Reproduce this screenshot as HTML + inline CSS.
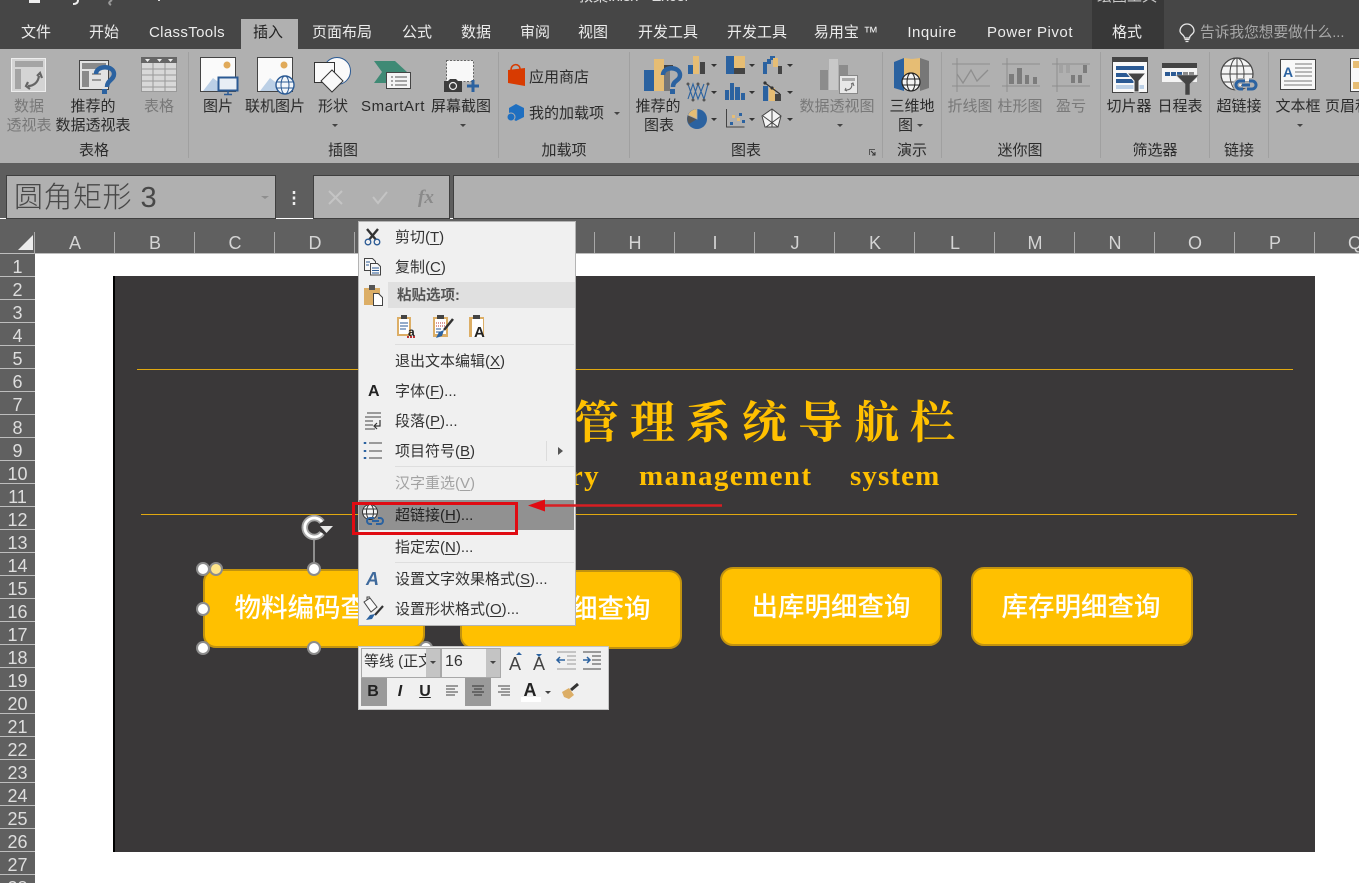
<!DOCTYPE html>
<html lang="zh-CN">
<head>
<meta charset="utf-8">
<title>教案.xlsx - Excel</title>
<style>
html,body{margin:0;padding:0;width:1359px;height:883px;overflow:hidden;background:#fff}
body{position:relative;font-family:"Liberation Sans","Noto Sans CJK SC",sans-serif;font-size:15px;color:#2b2b2b}
div,span.a{position:absolute;box-sizing:border-box}
.t{position:absolute;white-space:nowrap;line-height:20px;height:20px}
.c{transform:translateX(-50%)}
svg{position:absolute;left:0;top:0;overflow:visible}
#top{left:0;top:0;width:1359px;height:49px;background:#464646}
.tab{color:#ececec;top:23px}
#rib{left:0;top:49px;width:1359px;height:114px;background:#b0b0b0}
#gap{left:0;top:163px;width:1359px;height:55px;background:#5e5e5e}
.box{background:#b0b0b0;border:1px solid #3f3f3f}
.sep{width:1px;top:52px;height:106px;background:#a0a0a0}
.r{color:#2b2b2b}
.d{color:#787878}
.col{top:233px;color:#d4d4d4;font-size:18px;line-height:20px}
.cl{width:1px;height:21px;top:232px;background:#a8a8a8}
.row{left:0;width:35px;height:23px;padding-top:1px;background:#606060;border-bottom:1px solid #bdbdbd;color:#dedede;font-size:18px;line-height:24px;text-align:center}
.btn{background:#ffc000;border:2px solid #c2930f;border-radius:13px;height:79px;width:222px}
.bt{color:#fff;font-weight:500;font-size:26.500px;line-height:36px;height:36px}
.m{color:#333;left:395px}
.ml{background:#dedede;height:1px;left:395px;width:179px}
u{text-underline-offset:2px}
.en{top:458px;height:36px;line-height:36px;font-family:'Liberation Serif',serif;font-weight:700;font-size:29px;letter-spacing:1.400px;color:#ffc000}
</style>
</head>
<body>

<div id="top"></div>
<div style="left:1092px;top:0;width:72px;height:49px;background:#383838"></div>
<div style="left:241px;top:19px;width:57px;height:31px;background:#b0b0b0"></div>
<div class="t c" style="left:633px;top:-13px;color:#dedede;font-size:15px">教案.xlsx - Excel</div>
<div class="t c" style="left:1127px;top:-13px;color:#c8c8c8;font-size:15px">绘图工具</div>
<svg width="1359" height="20">
<path d="M29 0h11v3h-11z M33 0v2" fill="#eee"/>
<path d="M78 0c0 3-2 4-5 4" fill="none" stroke="#eee" stroke-width="2"/>
<path d="M112 0c-3 2-4 3-1 5" fill="none" stroke="#999" stroke-width="2"/>
<rect x="158" y="0" width="2" height="1" fill="#ddd"/>
</svg>
<div class="t c tab" style="left:36px">文件</div>
<div class="t c tab" style="left:104px">开始</div>
<div class="t c tab" style="left:187px;letter-spacing:.35px">ClassTools</div>
<div class="t c tab" style="left:268px;color:#222">插入</div>
<div class="t c tab" style="left:342px">页面布局</div>
<div class="t c tab" style="left:417px">公式</div>
<div class="t c tab" style="left:476px">数据</div>
<div class="t c tab" style="left:535px">审阅</div>
<div class="t c tab" style="left:593px">视图</div>
<div class="t c tab" style="left:668px">开发工具</div>
<div class="t c tab" style="left:757px">开发工具</div>
<div class="t c tab" style="left:846px">易用宝 ™</div>
<div class="t c tab" style="left:932px;letter-spacing:.5px">Inquire</div>
<div class="t c tab" style="left:1030px;letter-spacing:.55px">Power Pivot</div>
<div class="t c tab" style="left:1127px">格式</div>
<div class="t" style="left:1200px;top:23px;color:#a8a8a8;font-size:14.700px">告诉我您想要做什么...</div>
<svg width="1359" height="49">
<path d="M1184.500 38c0-3-4.500-4-4.500-7a7 7 0 0 1 14 0c0 3-4.500 4-4.500 7z" fill="none" stroke="#e8e8e8" stroke-width="1.300"/>
<path d="M1184.500 39.500h5M1185.500 41.500h3" stroke="#e8e8e8" stroke-width="1.300"/>
</svg>

<div id="rib"></div>
<div class="sep" style="left:188px"></div>
<div class="sep" style="left:498px"></div>
<div class="sep" style="left:629px"></div>
<div class="sep" style="left:882px"></div>
<div class="sep" style="left:941px"></div>
<div class="sep" style="left:1100px"></div>
<div class="sep" style="left:1209px"></div>
<div class="sep" style="left:1268px"></div>

<!-- ribbon labels -->
<div class="t c d" style="left:29px;top:97px">数据</div>
<div class="t c d" style="left:29px;top:116px">透视表</div>
<div class="t c r" style="left:93px;top:97px">推荐的</div>
<div class="t c r" style="left:93px;top:116px">数据透视表</div>
<div class="t c d" style="left:159px;top:97px">表格</div>
<div class="t c r" style="left:218px;top:97px">图片</div>
<div class="t c r" style="left:275px;top:97px">联机图片</div>
<div class="t c r" style="left:333px;top:97px">形状</div>
<div class="t c r" style="left:393px;top:97px;letter-spacing:.6px">SmartArt</div>
<div class="t c r" style="left:461px;top:97px">屏幕截图</div>
<div class="t r" style="left:529px;top:68px">应用商店</div>
<div class="t r" style="left:529px;top:104px">我的加载项</div>
<div class="t c r" style="left:658px;top:97px">推荐的</div>
<div class="t c r" style="left:659px;top:116px">图表</div>
<div class="t c d" style="left:837px;top:97px">数据透视图</div>
<div class="t c r" style="left:912px;top:97px">三维地</div>
<div class="t r" style="left:898px;top:116px">图</div>
<div class="t c d" style="left:970px;top:97px">折线图</div>
<div class="t c d" style="left:1020px;top:97px">柱形图</div>
<div class="t c d" style="left:1071px;top:97px">盈亏</div>
<div class="t c r" style="left:1129px;top:97px">切片器</div>
<div class="t c r" style="left:1180px;top:97px">日程表</div>
<div class="t c r" style="left:1239px;top:97px">超链接</div>
<div class="t c r" style="left:1298px;top:97px">文本框</div>
<div class="t r" style="left:1325px;top:97px">页眉和</div>
<div class="t c r" style="left:94px;top:141px">表格</div>
<div class="t c r" style="left:343px;top:141px">插图</div>
<div class="t c r" style="left:564px;top:141px">加载项</div>
<div class="t c r" style="left:746px;top:141px">图表</div>
<div class="t c r" style="left:912px;top:141px">演示</div>
<div class="t c r" style="left:1020px;top:141px">迷你图</div>
<div class="t c r" style="left:1155px;top:141px">筛选器</div>
<div class="t c r" style="left:1239px;top:141px">链接</div>

<!-- ribbon icons -->
<svg width="1359" height="163">
<!-- pivot table -->
<rect x="11.500" y="58.500" width="34" height="33" fill="#d4d4d4" stroke="#eee"/>
<rect x="15" y="61" width="28" height="6" fill="#a4a4a4"/><rect x="15" y="69" width="6" height="20" fill="#a4a4a4"/>
<path d="M28 86c5 0 10-3 11-10M37 76l3-3 2 5M28 82l-2 4 4 3" fill="none" stroke="#666" stroke-width="2.200"/>
<!-- recommended pivot -->
<rect x="79.500" y="60.500" width="29" height="29" fill="#e2e2e2" stroke="#444"/>
<rect x="82" y="63" width="24" height="6" fill="#8a8a8a"/><rect x="82" y="71" width="7" height="16" fill="#8a8a8a"/>
<path d="M92 74h9M92 80h9" stroke="#999" stroke-width="2"/>
<path d="M96 74c0-9 18-9 18 0 0 6-7 6-7 13" fill="none" stroke="#2b62a0" stroke-width="4.500"/><rect x="102" y="89" width="5" height="5" fill="#2b62a0"/>
<!-- table -->
<rect x="141.500" y="57.500" width="35" height="34" fill="#d8d8d8" stroke="#999"/><rect x="141" y="57" width="36" height="6" fill="#666"/>
<path d="M145 59h5l-2.500 3zM157 59h5l-2.500 3zM168 59h5l-2.500 3z" fill="#eee"/>
<path d="M141 69h36M141 75h36M141 81h36M141 87h36M153 63v29M165 63v29" stroke="#999"/>
<!-- picture -->
<rect x="200.500" y="57.500" width="35" height="34" fill="#fafafa" stroke="#444"/><circle cx="227" cy="65" r="3.500" fill="#e0aa5a"/>
<path d="M203 91l10-13 8 6 5 7z" fill="#bcd0e6"/>
<rect x="218.500" y="77.500" width="19" height="13" fill="#e8eef5" stroke="#2b5a94" stroke-width="2"/><path d="M228 91v3M224 94.500h8" stroke="#2b5a94" stroke-width="1.500"/>
<!-- online picture -->
<rect x="257.500" y="57.500" width="35" height="34" fill="#fafafa" stroke="#444"/><circle cx="284" cy="65" r="3.500" fill="#e0aa5a"/>
<path d="M260 91l10-13 8 6 5 7z" fill="#bcd0e6"/>
<circle cx="285" cy="85" r="9" fill="#f2f6fa" stroke="#2b5a94" stroke-width="1.400"/><ellipse cx="285" cy="85" rx="4" ry="9" fill="none" stroke="#2b5a94"/><path d="M276 82h18M276 88h18" stroke="#2b5a94"/>
<!-- shapes -->
<circle cx="337" cy="71" r="13.500" fill="#fafafa" stroke="#2b5a94"/>
<rect x="314.500" y="62.500" width="20" height="20" fill="#fafafa" stroke="#333"/>
<path d="M332 70l11 11-11 11-11-11z" fill="#fafafa" stroke="#333"/>
<!-- smartart -->
<path d="M374 61h21l12 11h-8v11h-25l8-11z" fill="#3f8a75"/>
<rect x="386.500" y="72.500" width="24" height="16" fill="#f4f4f4" stroke="#444"/>
<path d="M391 77h2M395 77h12M391 81h2M395 81h12M391 85h2M395 85h12" stroke="#555"/>
<!-- screenshot -->
<rect x="446.500" y="60.500" width="27" height="21" fill="#f8f8f8" stroke="#666" stroke-dasharray="2 1.500"/>
<path d="M444 81h4l2-2h6l2 2h4v11h-18z" fill="#3d3d3d"/><circle cx="453" cy="86" r="3.500" fill="#3d3d3d" stroke="#eee" stroke-width="1.200"/>
<path d="M473 80v12M467 86h12" stroke="#2b62a0" stroke-width="3"/>
<!-- dropdown carets -->
<path d="M332 124h6l-3 3zM460 124h6l-3 3zM614 112h6l-3 3zM837 124h6l-3 3zM917 124h6l-3 3zM1297 124h6l-3 3z" fill="#444"/>
<path d="M711 64h6l-3 3zM749 64h6l-3 3zM787 64h6l-3 3zM711 91h6l-3 3zM749 91h6l-3 3zM787 91h6l-3 3zM711 118h6l-3 3zM749 118h6l-3 3zM787 118h6l-3 3z" fill="#333"/>
<!-- store -->
<path d="M508 70l17-2v18l-17-3z" fill="#d83b01"/><path d="M511 70c0-7 9-7 9-1" fill="none" stroke="#d83b01" stroke-width="1.500"/>
<!-- my addins -->
<path d="M516 104l8 4v9l-8 4-7-4v-9z" fill="#1f6fc0"/><circle cx="511" cy="117" r="4" fill="#1f6fc0" stroke="#b0b0b0"/>
<!-- recommended chart -->
<rect x="644" y="70" width="10" height="21" fill="#2b62a0"/><rect x="654" y="59" width="10" height="32" fill="#e6bd74"/><rect x="664" y="65" width="9" height="4" fill="#444"/><rect x="664" y="69" width="6" height="22" fill="#777"/>
<path d="M663 75c0-9 17-9 17 0 0 6-7 5-7 12" fill="none" stroke="#2b62a0" stroke-width="4.500"/><rect x="670" y="89" width="5" height="5" fill="#2b62a0"/>
<!-- small chart icons r1 -->
<rect x="688" y="65" width="5" height="9" fill="#2b62a0"/><rect x="693" y="56" width="6" height="18" fill="#e6bd74"/><rect x="700" y="62" width="5" height="12" fill="#444"/>
<rect x="726" y="56" width="8" height="18" fill="#2b62a0"/><rect x="734" y="56" width="11" height="12" fill="#e6bd74"/><rect x="734" y="68" width="11" height="6" fill="#444"/>
<rect x="763" y="62" width="4" height="12" fill="#2b62a0"/><rect x="767" y="59" width="4" height="5" fill="#2b62a0"/><rect x="770" y="56" width="5" height="4" fill="#2b62a0"/><rect x="773" y="58" width="5" height="9" fill="#e6bd74"/><rect x="778" y="66" width="4" height="8" fill="#444"/>
<!-- r2 -->
<path d="M688 84l5 15 5-15 6 15 4-15M688 99l5-15 5 15 6-15" fill="none" stroke="#2b62a0" stroke-width="1.100"/>
<g fill="#555"><circle cx="688" cy="84" r="1.500"/><circle cx="698" cy="84" r="1.500"/><circle cx="708" cy="84" r="1.500"/><circle cx="693" cy="100" r="1.500"/><circle cx="704" cy="100" r="1.500"/></g>
<rect x="725" y="90" width="4" height="10" fill="#2b62a0"/><rect x="730" y="83" width="4" height="17" fill="#2b62a0"/><rect x="735" y="87" width="5" height="13" fill="#2b62a0"/><rect x="741" y="93" width="4" height="7" fill="#2b62a0"/>
<rect x="763" y="86" width="5" height="15" fill="#2b62a0"/><rect x="769" y="88" width="6" height="13" fill="#e6bd74"/><rect x="775" y="94" width="6" height="7" fill="#444"/>
<path d="M765 83l15 11" stroke="#333" stroke-width="1.200"/><circle cx="765" cy="83" r="1.600" fill="#333"/><circle cx="772" cy="88" r="1.600" fill="#333"/>
<!-- r3 -->
<circle cx="697" cy="119" r="10" fill="#2b62a0"/><path d="M697 119v-10a10 10 0 0 0-9 6z" fill="#e6bd74"/><path d="M697 119l-9-4a10 10 0 0 0 1 9z" fill="#555"/><path d="M697 109v10l-9-4" fill="none" stroke="#b0b0b0" stroke-width=".8"/>
<path d="M726.500 109v18h18" fill="none" stroke="#444"/><rect x="730" y="122" width="3" height="3" fill="#2b62a0"/><rect x="732" y="115" width="3" height="3" fill="#e6bd74"/><rect x="737" y="118" width="3" height="3" fill="#e6bd74"/><rect x="739" y="113" width="3" height="3" fill="#2b62a0"/><rect x="742" y="120" width="3" height="3" fill="#2b62a0"/>
<path d="M772 109l9 7-3 11h-13l-3-11z" fill="#f4f4f4" stroke="#444"/><path d="M772 109v18M763 116l15 11M781 116l-15 11" stroke="#444"/>
<!-- pivot chart -->
<rect x="820" y="70" width="8" height="20" fill="#8c8c8c"/><rect x="829" y="59" width="9" height="31" fill="#c8c8c8"/><rect x="839" y="65" width="9" height="10" fill="#8c8c8c"/>
<rect x="839.500" y="75.500" width="18" height="18" fill="#e8e8e8" stroke="#888"/><rect x="842" y="78" width="13" height="3" fill="#aaa"/><path d="M846 90c4 0 6-2 6-6M851 84l2-1 1 3M846 88l-1 2 2 1" fill="none" stroke="#666"/>
<!-- launcher -->
<path d="M869.500 155v-5.500h5.500" fill="none" stroke="#555"/><path d="M871 151l4 4M875 152v3h-3" fill="none" stroke="#333"/>
<!-- 3d map -->
<path d="M894 62l10-4v33l-10-3z" fill="#2b62a0"/><path d="M904 58l8 1 8-1v20h-16z" fill="#e6bd74"/><path d="M920 58l9 3v27l-9 3z" fill="#777"/>
<circle cx="911" cy="82" r="9" fill="#f4f4f4" stroke="#222" stroke-width="1.200"/><ellipse cx="911" cy="82" rx="4" ry="9" fill="none" stroke="#222"/><path d="M902 79h18M902 85h18" stroke="#222"/>
<!-- sparklines -->
<g fill="none" stroke="#8e8e8e">
<path d="M952 64h38M952 86h38M957 58v34M1002 64h38M1002 86h38M1007 58v34M1052 64h38M1052 86h38M1057 58v34"/>
<path d="M957 74l6 9 8-13 6 11 11-11" stroke-width="1.300"/></g>
<g fill="#7c7c7c"><rect x="1009" y="74" width="5" height="10"/><rect x="1017" y="68" width="5" height="16"/><rect x="1025" y="75" width="4" height="9"/><rect x="1033" y="77" width="4" height="7"/>
<rect x="1071" y="75" width="4" height="8"/><rect x="1078" y="75" width="4" height="8"/><rect x="1083" y="65" width="4" height="8"/></g>
<g fill="#a2a2a2"><rect x="1059" y="65" width="4" height="8"/><rect x="1066" y="65" width="4" height="8"/></g>
<!-- slicer -->
<rect x="1112.500" y="57.500" width="35" height="35" fill="#f8f8f8" stroke="#444"/><rect x="1112" y="57" width="36" height="5" fill="#444"/>
<rect x="1116" y="66" width="28" height="4" fill="#2b5a94"/><rect x="1116" y="73" width="19" height="4" fill="#2b5a94"/><rect x="1116" y="79" width="19" height="4" fill="#2b5a94"/><rect x="1116" y="85" width="28" height="4" fill="#bcd0e6"/>
<path d="M1127 73h19l-7 8v11h-5V81z" fill="#444" stroke="#f8f8f8"/>
<!-- timeline -->
<rect x="1162" y="63" width="35" height="19" fill="#f4f4f4"/><rect x="1162" y="63" width="35" height="5" fill="#444"/>
<rect x="1165" y="72" width="5" height="4" fill="#2b5a94"/><rect x="1171" y="72" width="5" height="4" fill="#2b5a94"/><rect x="1177" y="72" width="5" height="4" fill="#2b5a94"/><rect x="1183" y="72" width="5" height="4" fill="#888"/><rect x="1189" y="72" width="5" height="4" fill="#888"/>
<path d="M1176 75h23l-9 9v11h-5V84z" fill="#444" stroke="#b0b0b0" stroke-width=".6"/>
<!-- hyperlink -->
<circle cx="1237" cy="74" r="16" fill="#f4f4f4" stroke="#444" stroke-width="1.200"/><ellipse cx="1237" cy="74" rx="7" ry="16" fill="none" stroke="#444"/><path d="M1223 66h28M1221 74h32M1223 82h28M1237 58v32" stroke="#444"/>
<path d="M1243 89h-3a4 4 0 0 1 0-8h5M1250 85h-8M1249 81h3a4 4 0 0 1 0 8h-5" fill="none" stroke="#b0b0b0" stroke-width="6"/>
<path d="M1243 89h-3a4 4 0 0 1 0-8h5M1250 85h-8M1249 81h3a4 4 0 0 1 0 8h-5" fill="none" stroke="#2b62a0" stroke-width="3"/>
<!-- textbox -->
<rect x="1280.500" y="59.500" width="35" height="30" fill="#f8f8f8" stroke="#444"/><text x="1283" y="77" font-family="Liberation Sans" font-weight="700" font-size="14" fill="#2b62a0">A</text>
<path d="M1295 64h17M1295 68h17M1295 72h17M1295 76h17M1284 81h28M1284 85h28" stroke="#777"/>
<!-- header -->
<rect x="1350.500" y="58.500" width="10" height="33" fill="#f8f8f8" stroke="#444"/><rect x="1353" y="61" width="6" height="7" fill="#e6bd74"/><rect x="1353" y="82" width="6" height="7" fill="#e6bd74"/>
</svg>

<!-- formula bar -->
<div id="gap"></div>
<div class="box" style="left:6px;top:175px;width:270px;height:44px"></div>
<div class="t" style="left:14px;top:178px;height:40px;line-height:40px;font-size:29px;font-weight:300;letter-spacing:.5px;color:#484848">圆角矩形 3</div>
<div class="box" style="left:313px;top:175px;width:137px;height:44px"></div>
<div class="box" style="left:453px;top:175px;width:910px;height:44px"></div>
<svg width="1359" height="254">
<path d="M261 196h8l-4 3z" fill="#8e8e8e"/>
<path d="M294 191v3M294 196.500v3M294 202v3" stroke="#eee" stroke-width="2.500"/>
<path d="M329 191l13 13M342 191l-13 13" stroke="#c4c4c4" stroke-width="2"/>
<path d="M373 197l5 6 9-11" fill="none" stroke="#c4c4c4" stroke-width="2"/>
<text x="418" y="203" font-family="Liberation Serif" font-style="italic" font-weight="700" font-size="19" fill="#8a8a8a">fx</text>
</svg>

<!-- column headers -->
<div style="left:0;top:219px;width:1359px;height:35px;background:#606060;border-bottom:1px solid #bdbdbd"></div>
<svg width="1359" height="254"><path d="M33 235v15h-15z" fill="#ececec"/></svg>
<div class="cl" style="left:34px;height:22px"></div>
<div class="cl" style="left:114px"></div><div class="cl" style="left:194px"></div><div class="cl" style="left:274px"></div><div class="cl" style="left:354px"></div><div class="cl" style="left:594px"></div><div class="cl" style="left:674px"></div><div class="cl" style="left:754px"></div><div class="cl" style="left:834px"></div><div class="cl" style="left:914px"></div><div class="cl" style="left:994px"></div><div class="cl" style="left:1074px"></div><div class="cl" style="left:1154px"></div><div class="cl" style="left:1234px"></div><div class="cl" style="left:1314px"></div>
<div class="t c col" style="left:75px">A</div><div class="t c col" style="left:155px">B</div><div class="t c col" style="left:235px">C</div><div class="t c col" style="left:315px">D</div><div class="t c col" style="left:635px">H</div><div class="t c col" style="left:715px">I</div><div class="t c col" style="left:795px">J</div><div class="t c col" style="left:875px">K</div><div class="t c col" style="left:955px">L</div><div class="t c col" style="left:1035px">M</div><div class="t c col" style="left:1115px">N</div><div class="t c col" style="left:1195px">O</div><div class="t c col" style="left:1275px">P</div><div class="t c col" style="left:1355px">Q</div>

<!-- row headers -->
<div class="row" style="top:254px">1</div><div class="row" style="top:277px">2</div><div class="row" style="top:300px">3</div><div class="row" style="top:323px">4</div><div class="row" style="top:346px">5</div><div class="row" style="top:369px">6</div><div class="row" style="top:392px">7</div><div class="row" style="top:415px">8</div><div class="row" style="top:438px">9</div><div class="row" style="top:461px">10</div><div class="row" style="top:484px">11</div><div class="row" style="top:507px">12</div><div class="row" style="top:530px">13</div><div class="row" style="top:553px">14</div><div class="row" style="top:576px">15</div><div class="row" style="top:599px">16</div><div class="row" style="top:622px">17</div><div class="row" style="top:645px">18</div><div class="row" style="top:668px">19</div><div class="row" style="top:691px">20</div><div class="row" style="top:714px">21</div><div class="row" style="top:737px">22</div><div class="row" style="top:760px">23</div><div class="row" style="top:783px">24</div><div class="row" style="top:806px">25</div><div class="row" style="top:829px">26</div><div class="row" style="top:852px">27</div><div class="row" style="top:875px">28</div>

<!-- dark panel -->
<div style="left:113px;top:276px;width:1202px;height:576px;background:#3a3839;border-left:2px solid #000"></div>
<div style="left:137px;top:369px;width:1156px;height:1px;background:#e0a810"></div>
<div style="left:141px;top:514px;width:1156px;height:1px;background:#e0a810"></div>
<div class="t" style="left:462px;top:393px;height:60px;line-height:60px;font-family:'Liberation Serif','Noto Serif CJK SC',serif;font-weight:700;font-size:45px;letter-spacing:11px;color:#ffc000">物料管理系统导航栏</div>
<div class="t en" style="left:400px;width:200px;text-align:right">inventory</div>
<div class="t en" style="left:639px">management</div>
<div class="t en" style="left:850px;letter-spacing:1.100px">system</div>

<!-- buttons -->
<div class="btn" style="left:203px;top:569px"></div>
<div class="btn" style="left:460px;top:570px"></div>
<div class="btn" style="left:720px;top:567px"></div>
<div class="btn" style="left:971px;top:567px"></div>
<div class="t c bt" style="left:314px;top:590px">物料编码查询</div>
<div class="t c bt" style="left:571px;top:591px">入库明细查询</div>
<div class="t c bt" style="left:831px;top:589px">出库明细查询</div>
<div class="t c bt" style="left:1081px;top:589px">库存明细查询</div>

<!-- selection handles -->
<svg width="1359" height="883">
<path d="M314 538v24" stroke="#aaa" stroke-width="1.500"/>
<g fill="#fff" stroke="#8c8c8c" stroke-width="2">
<circle cx="203" cy="569" r="6"/><circle cx="314" cy="569" r="6"/><circle cx="203" cy="609" r="6"/><circle cx="203" cy="648" r="6"/><circle cx="314" cy="648" r="6"/><circle cx="426" cy="648" r="6"/>
<circle cx="216" cy="569" r="6" fill="#ffe58a"/></g>
<path d="M322 522a9.500 9.500 0 1 0 0 11" fill="none" stroke="#a4a4a4" stroke-width="6.500"/>
<path d="M322 522a9.500 9.500 0 1 0 0 11" fill="none" stroke="#fff" stroke-width="2.800"/>
<path d="M320 526h13l-6.500 7z" fill="#e8e8e8"/>
</svg>

<!-- context menu -->
<div style="left:358px;top:221px;width:218px;height:405px;background:#f0f0f0;border:1px solid #b4b4b4"></div>
<div style="left:388px;top:282px;width:187px;height:26px;background:#e0e0e0"></div>
<div style="left:359px;top:500px;width:215px;height:30px;background:#919191"></div>
<div class="ml" style="top:344px"></div>
<div class="ml" style="top:466px"></div>
<div class="ml" style="top:562px"></div>
<div style="left:546px;top:441px;width:1px;height:20px;background:#dcdcdc"></div>
<div class="t m" style="top:228px">剪切(<u>T</u>)</div>
<div class="t m" style="top:258px">复制(<u>C</u>)</div>
<div class="t" style="left:397px;top:286px;font-weight:700;color:#555;font-size:14.500px">粘贴选项:</div>
<div class="t m" style="top:352px">退出文本编辑(<u>X</u>)</div>
<div class="t m" style="top:382px">字体(<u>F</u>)...</div>
<div class="t m" style="top:412px">段落(<u>P</u>)...</div>
<div class="t m" style="top:442px">项目符号(<u>B</u>)</div>
<div class="t m" style="top:474px;color:#a2a2a2">汉字重选(<u>V</u>)</div>
<div class="t m" style="top:506px;color:#222">超链接(<u>H</u>)...</div>
<div class="t m" style="top:538px">指定宏(<u>N</u>)...</div>
<div class="t m" style="top:570px">设置文字效果格式(<u>S</u>)...</div>
<div class="t m" style="top:600px">设置形状格式(<u>O</u>)...</div>

<svg width="1359" height="883">
<!-- scissors -->
<path d="M367 229l10 12M378 229l-10 12" stroke="#333" stroke-width="2.400"/>
<circle cx="368" cy="242" r="2.800" fill="#f0f0f0" stroke="#2b5a94" stroke-width="1.300"/><circle cx="377" cy="242" r="2.800" fill="#f0f0f0" stroke="#2b5a94" stroke-width="1.300"/>
<!-- copy -->
<path d="M364.500 258.500h8l3 3v9h-11z" fill="#f8f8f8" stroke="#444"/><path d="M370.500 263.500h7l3 3v8.500h-10z" fill="#f8f8f8" stroke="#444"/><path d="M372 268h7M372 270.500h7M372 273h7M366 262h4M366 265h3" stroke="#2b5a94"/>
<!-- paste -->
<rect x="364" y="288" width="16" height="17" fill="#dcae66"/><rect x="369" y="285" width="6" height="5" fill="#555"/><path d="M373.500 293.500h5l4 4v8h-9z" fill="#fff" stroke="#444"/>
<!-- paste options -->
<rect x="397" y="317" width="14" height="19" fill="#dcae66"/><rect x="399" y="319" width="10" height="15" fill="#fff"/><rect x="401" y="315" width="6" height="4" fill="#444"/><path d="M400 323h8M400 326h8M400 329h6" stroke="#2b5a94"/>
<text x="408" y="336" font-family="Liberation Sans" font-weight="700" font-size="12" fill="#222">a</text><path d="M407 337h2M410 337h2M413 337h2" stroke="#b33" stroke-width="2"/>
<rect x="433" y="317" width="15" height="20" fill="#dcae66"/><rect x="435" y="319" width="11" height="15" fill="#fff"/><rect x="437" y="315" width="7" height="4" fill="#444"/><path d="M436 323h9M436 326h9" stroke="#b33" stroke-dasharray="1 1"/><path d="M436 329h5M436 332h4" stroke="#2b5a94"/>
<path d="M453 319l-9 11" stroke="#333" stroke-width="2.500"/><path d="M444 330l-2 6-6 2 3-6z" fill="#2b62a0"/>
<rect x="469" y="317" width="15" height="20" fill="#dcae66"/><rect x="472" y="319" width="11" height="18" fill="#fff"/><rect x="473" y="315" width="7" height="4" fill="#444"/>
<text x="474" y="337" font-family="Liberation Sans" font-weight="700" font-size="15" fill="#222">A</text>
<!-- font A -->
<text x="368" y="396" font-family="Liberation Sans" font-weight="700" font-size="16" fill="#222">A</text>
<!-- paragraph -->
<path d="M367 413h14M365 417h16M365 421h8M365 425h8M365 429h10" stroke="#444"/><path d="M380 420v6h-5M377 423l-3 3 3 3" fill="none" stroke="#333" stroke-width="1.200"/>
<!-- bullets -->
<path d="M365 442v2M365 450v2M365 457v2" stroke="#2b62a0" stroke-width="2.500"/><path d="M369 443h13M369 451h13M369 458h13" stroke="#444"/>
<!-- submenu arrow -->
<path d="M558 447l5 4-5 4z" fill="#555"/>
<!-- hyperlink -->
<circle cx="370" cy="512" r="7.500" fill="#f4f4f4" stroke="#333"/><ellipse cx="370" cy="512" rx="3.500" ry="7.500" fill="none" stroke="#333"/><path d="M363 509h14M363 514h14" stroke="#333"/>
<path d="M372 524h-2a3 3 0 0 1 0-6h4M379 521h-7M378 518h2a3 3 0 0 1 0 6h-4" fill="none" stroke="#2b62a0" stroke-width="2"/>
<!-- text effects -->
<text x="366" y="585" font-family="Liberation Sans" font-style="italic" font-weight="700" font-size="18" fill="#3f6a9c">A</text>
<!-- shape format -->
<path d="M364 602l6-4 7 9-6 5z" fill="#f8f8f8" stroke="#444"/><path d="M367 600v-3h3" fill="none" stroke="#444"/>
<path d="M383 606l-8 9" stroke="#333" stroke-width="2.200"/><path d="M375 614l-3 5-6 1 4-5z" fill="#2b62a0"/>
</svg>

<!-- mini toolbar -->
<div style="left:358px;top:646px;width:251px;height:64px;background:#f0f0f0;border:1px solid #c4c4c4"></div>
<div style="left:361px;top:648px;width:80px;height:30px;background:#f0f0f0;border:1px solid #a8a8a8"></div>
<div style="left:441px;top:648px;width:60px;height:30px;background:#f0f0f0;border:1px solid #a8a8a8"></div>
<div class="t" style="left:364px;top:652px;width:62px;overflow:hidden;color:#333">等线 (正文</div>
<div style="left:426px;top:649px;width:14px;height:28px;background:#c4c4c4"></div>
<div style="left:486px;top:649px;width:14px;height:28px;background:#c4c4c4"></div>
<div class="t" style="left:445px;top:652px;color:#333;font-size:16px">16</div>
<div style="left:361px;top:678px;width:26px;height:28px;background:#9a9a9a"></div>
<div style="left:465px;top:678px;width:26px;height:28px;background:#9a9a9a"></div>
<div class="t c" style="left:373px;top:682px;font-weight:700;font-size:16px;color:#222">B</div>
<div class="t c" style="left:400px;top:682px;font-weight:700;font-style:italic;font-size:16px;color:#222">I</div>
<div class="t c" style="left:425px;top:682px;font-weight:700;font-size:16px;color:#222;text-decoration:underline">U</div>
<div class="t c" style="left:515px;top:654px;font-size:18px;color:#444">A</div>
<div class="t c" style="left:539px;top:654px;font-size:18px;color:#444">A</div>
<div class="t c" style="left:530px;top:680px;font-weight:700;font-size:18px;color:#222">A</div>
<svg width="1359" height="883">
<path d="M430 661h6l-3 3zM490 661h6l-3 3zM545 691h6l-3 3z" fill="#444"/>
<path d="M516 655l3-3 3 3zM536 654l3 3 3-3z" fill="#2b62a0"/>
<path d="M567 656h9M567 660h9M567 664h9M557 669h19M557 652h19" stroke="#999"/><path d="M565 660h-8M560 657l-3 3 3 3" fill="none" stroke="#2b62a0" stroke-width="1.500"/>
<path d="M592 656h9M592 660h9M592 664h9M583 669h18M583 652h18" stroke="#444"/><path d="M583 660h7M587 657l3 3-3 3" fill="none" stroke="#2b62a0" stroke-width="1.500"/>
<path d="M446 686h12M446 689h9M446 692h12M446 695h9" stroke="#444"/>
<path d="M472 686h12M474 689h8M472 692h12M474 695h8" stroke="#333"/>
<path d="M498 686h12M501 689h9M498 692h12M501 695h9" stroke="#444"/>
<rect x="521" y="697" width="20" height="5" fill="#fff"/>
<path d="M562 692l7-4 5 7-5 4-5-2z" fill="#dcae66"/><path d="M571 690l7-6" stroke="#333" stroke-width="3"/>
</svg>

<!-- red annotation -->
<div style="left:352px;top:502px;width:166px;height:33px;border:3px solid #e00b12"></div>
<svg width="1359" height="883">
<path d="M545 505.500h177" stroke="#d81e22" stroke-width="2.500"/>
<path d="M528 505.500l17-6v12z" fill="#e00b12"/>
</svg>

</body>
</html>
